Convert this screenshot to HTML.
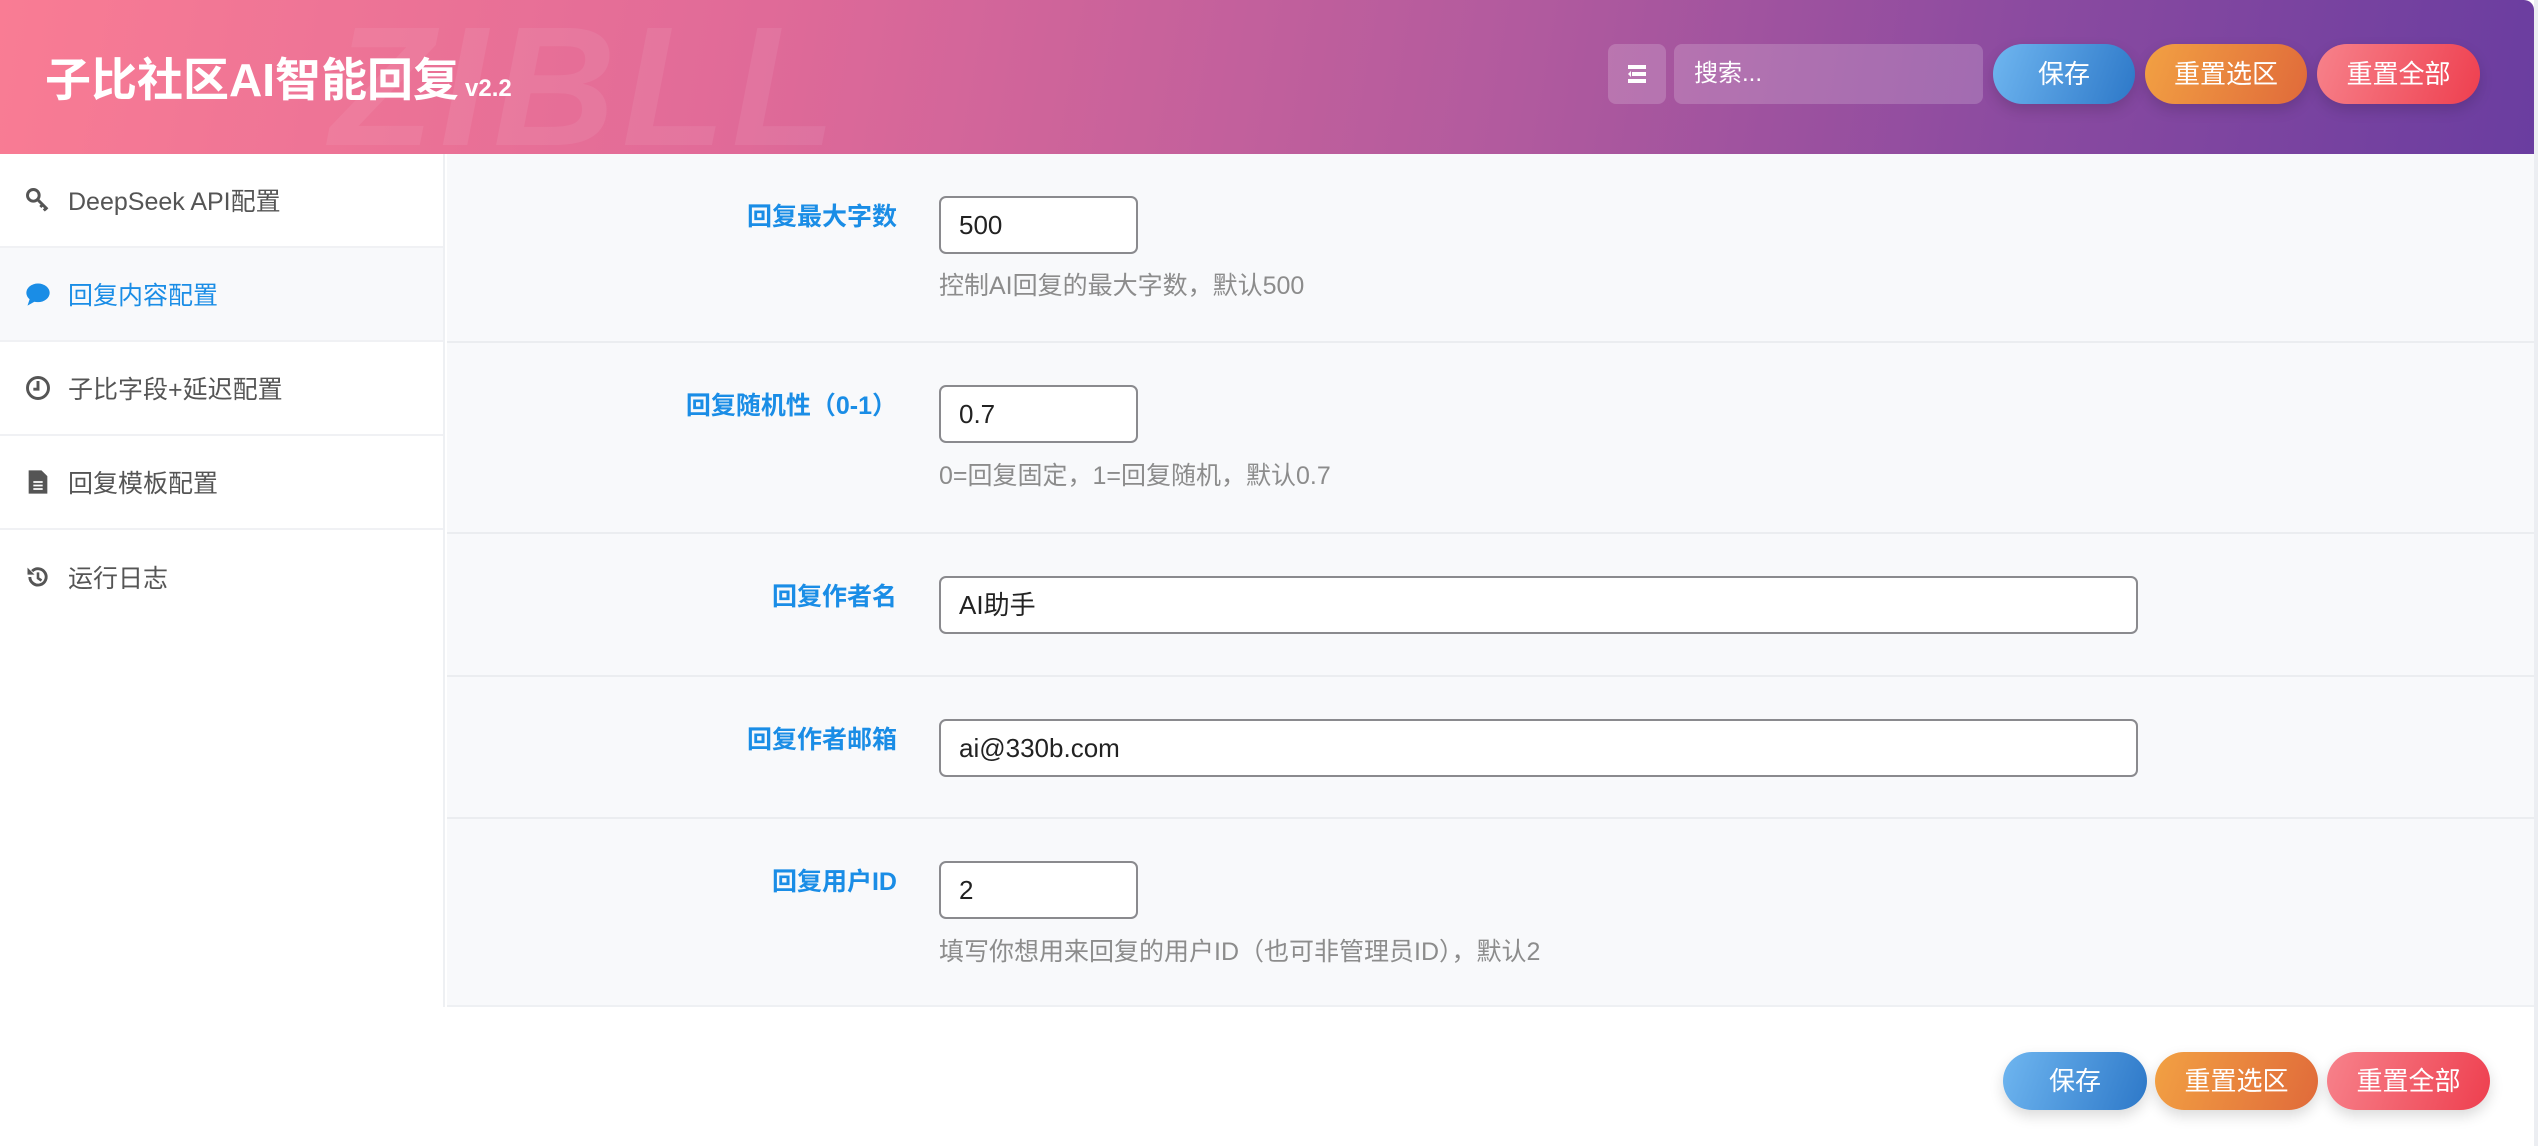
<!DOCTYPE html>
<html><head><meta charset="utf-8"><style>
*{box-sizing:border-box;margin:0;padding:0}
body{width:2538px;height:1146px;overflow:hidden;background:#fff;font-family:"Liberation Sans","Noto Sans CJK SC",sans-serif;position:relative}
.hdr{position:absolute;left:0;top:0;width:2534px;height:154px;background:linear-gradient(100deg,#f97c94 0%,#e06a98 30%,#b15a9e 60%,#8a4aa0 80%,#6a3da0 100%);overflow:hidden;border-top-right-radius:10px}
.wm{position:absolute;left:330px;top:2px;font-size:170px;line-height:170px;font-weight:bold;font-style:italic;color:rgba(255,255,255,0.07);letter-spacing:6px;font-family:"Liberation Sans",sans-serif}
.title{position:absolute;left:45px;top:44px;color:#fff;font-size:46px;font-weight:bold;white-space:nowrap}
.title small{font-size:24px;margin-left:6px}
.ib{position:absolute;left:1608px;top:44px;width:58px;height:60px;border-radius:8px;background:rgba(255,255,255,0.18)}
.srch{position:absolute;left:1674px;top:44px;width:309px;height:60px;border-radius:8px;background:rgba(255,255,255,0.18);color:#fff;font-size:24px;line-height:60px;padding-left:20px}
.btn{position:absolute;top:44px;height:60px;border-radius:30px;color:#fff;font-size:26px;text-align:center;line-height:60px;box-shadow:0 6px 14px rgba(0,0,0,0.15)}
.b1{background:linear-gradient(110deg,#6fb6f0,#2d78c8)}
.b2{background:linear-gradient(110deg,#f2a143,#e06a3a)}
.b3{background:linear-gradient(110deg,#f7828b,#ee3f4f)}
.side{position:absolute;left:0;top:154px;width:445px;height:853px;border-right:2px solid #eef0f3;background:#fff}
.it{height:94px;border-bottom:2px solid #f0f1f4;display:flex;align-items:center;padding-left:24px;font-size:25px;color:#555}
.it.a{background:#f8f9fb;color:#1a8de6}
.it svg{width:28px;height:28px;margin-right:16px}
.main{position:absolute;left:447px;top:154px;width:2087px;height:853px;background:#f8f9fb;border-bottom:2px solid #eef0f3}
.row{position:relative;border-bottom:2px solid #ebedf0}
.lbl{position:absolute;right:1637px;top:43px;color:#1a8de6;font-weight:bold;font-size:25px;white-space:nowrap}
.inp{position:absolute;left:492px;top:42px;height:58px;border:2px solid #8a8a8e;border-radius:7px;background:#fff;font-size:26px;color:#222;line-height:54px;padding-left:18px}
.desc{position:absolute;left:492px;color:#8c8c8c;font-size:25px;white-space:nowrap}
.rb{position:absolute;right:0;top:0;width:4px;height:1146px;background:#eceef2}
</style></head><body>
<div class="hdr"><div class="wm">ZIBLL</div>
<div class="title">子比社区AI智能回复<small>v2.2</small></div>
<div class="ib"><svg width="58" height="60" viewBox="0 0 58 60"><rect x="20" y="21" width="18" height="4" fill="#fff"/><rect x="24" y="28" width="14" height="4" fill="#fff"/><rect x="20" y="35" width="18" height="4" fill="#fff"/><path d="M23 27l-3 3 3 3z" fill="#fff"/></svg></div>
<div class="srch">搜索...</div>
<div class="btn b1" style="left:1993px;width:142px">保存</div>
<div class="btn b2" style="left:2145px;width:162px">重置选区</div>
<div class="btn b3" style="left:2317px;width:163px">重置全部</div>
</div>
<div class="side">
<div class="it"><svg viewBox="0 0 24 24"><circle cx="8" cy="8" r="5" fill="none" stroke="#555" stroke-width="2.5"/><path d="M11 11l9 9M16 16l-2 2M19 19l-2 2" stroke="#555" stroke-width="2.5"/></svg>DeepSeek API配置</div>
<div class="it a"><svg viewBox="0 0 24 24"><ellipse cx="12" cy="11" rx="10" ry="8" fill="#1a8de6"/><path d="M5 16l-2 6 7-4z" fill="#1a8de6"/></svg>回复内容配置</div>
<div class="it"><svg viewBox="0 0 24 24"><circle cx="12" cy="12" r="9" fill="none" stroke="#555" stroke-width="2.5"/><path d="M12 6v7h-4" fill="none" stroke="#555" stroke-width="2.5"/></svg>子比字段+延迟配置</div>
<div class="it"><svg viewBox="0 0 24 24"><path d="M4 2h11l5 5v15H4z" fill="#555"/><path d="M8 12h8M8 15h8M8 18h8" stroke="#fff" stroke-width="1.5"/></svg>回复模板配置</div>
<div class="it" style="border-bottom:none"><svg viewBox="0 0 24 24"><path d="M5 12a7 7 0 1 0 2-5" fill="none" stroke="#555" stroke-width="2.5"/><path d="M3 4v6h6z" fill="#555"/><path d="M12 8v5l3 2" fill="none" stroke="#555" stroke-width="2.2"/></svg>运行日志</div>
</div>
<div class="main">
<div class="row" style="height:189px"><div class="lbl">回复最大字数</div><div class="inp" style="width:199px">500</div><div class="desc" style="top:112px">控制AI回复的最大字数，默认500</div></div>
<div class="row" style="height:191px"><div class="lbl">回复随机性（0-1）</div><div class="inp" style="width:199px">0.7</div><div class="desc" style="top:113px">0=回复固定，1=回复随机，默认0.7</div></div>
<div class="row" style="height:143px"><div class="lbl">回复作者名</div><div class="inp" style="width:1199px">AI助手</div></div>
<div class="row" style="height:142px"><div class="lbl">回复作者邮箱</div><div class="inp" style="width:1199px">ai@330b.com</div></div>
<div class="row" style="height:186px;border-bottom:none"><div class="lbl">回复用户ID</div><div class="inp" style="width:199px">2</div><div class="desc" style="top:113px">填写你想用来回复的用户ID（也可非管理员ID），默认2</div></div>
</div>
<div class="btn b1" style="left:2003px;top:1052px;width:144px;height:58px;line-height:58px">保存</div>
<div class="btn b2" style="left:2155px;top:1052px;width:163px;height:58px;line-height:58px">重置选区</div>
<div class="btn b3" style="left:2327px;top:1052px;width:163px;height:58px;line-height:58px">重置全部</div>
<div class="rb"></div>
</body></html>
